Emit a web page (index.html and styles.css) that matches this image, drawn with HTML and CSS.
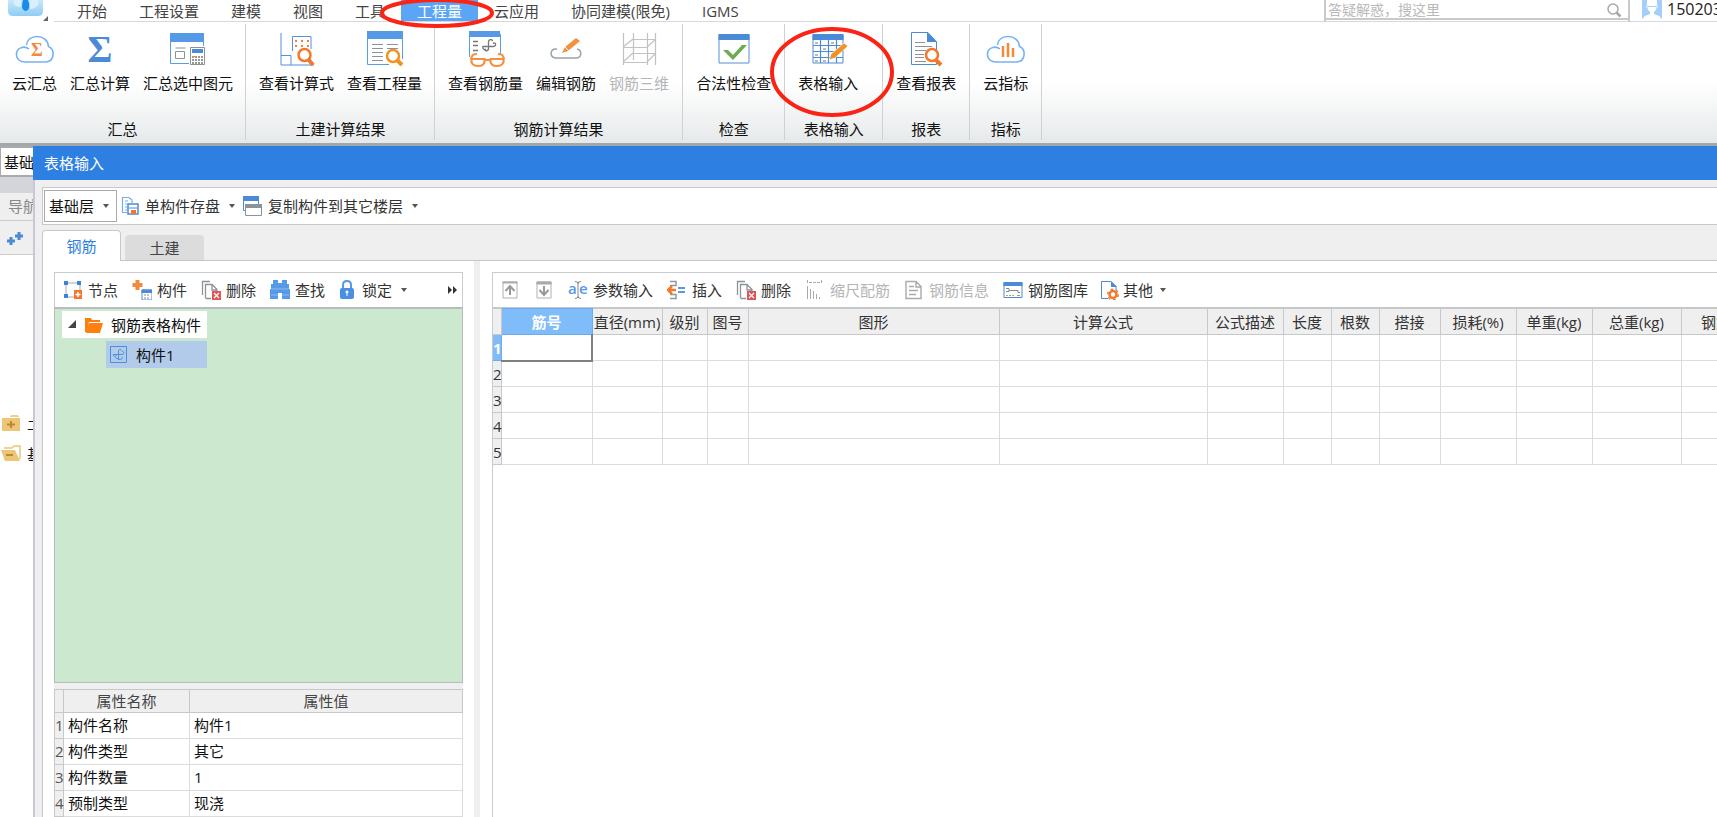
FILE: index.html
```html
<!DOCTYPE html>
<html lang="zh-CN">
<head>
<meta charset="utf-8">
<title>表格输入</title>
<link rel="stylesheet" href="styles.css">
</head>
<body>
<header class="topbar">
  <button class="logo" aria-label="菜单">
    <svg width="54" height="22" viewBox="0 0 54 22"><defs><linearGradient id="lg" x1="0" x2="0" y1="0" y2="1"><stop offset="0" stop-color="#c9e8fb"/><stop offset="1" stop-color="#8fcdf5"/></linearGradient></defs><path d="M8 0H43V11Q43 16 38 16H13Q8 16 8 11Z" fill="url(#lg)"/><path d="M14 0h7v7q-5 0-7-3zM30 0h8v5q-3 4-8 4z" fill="#d9effc"/><path d="M23 0h5q2 4 1 8-1 3-3 3-3 0-4-4 0-4 1-7z" fill="#1a8be6"/><path d="M48 16v5h-5z" fill="#666"/></svg>
  </button>
  <nav class="tabs">
    <button>开始</button><button>工程设置</button><button>建模</button><button>视图</button><button>工具</button>
    <button class="on">工程量<svg class="mark mark-tab" width="120" height="32"><ellipse cx="60" cy="14" rx="55" ry="13"/></svg></button>
    <button>云应用</button><button>协同建模(限免)</button><button>IGMS</button>
  </nav>
  <div class="search">
    <input type="text" aria-label="搜索" placeholder="答疑解惑，搜这里">
    <svg width="16" height="16" fill="none" stroke="#a8a8a8"><circle cx="7" cy="7" r="5" stroke-width="1.5"/><path d="M10.500 10.500L14.500 14.500" stroke-width="2.500"/></svg>
  </div>
  <div class="user">
    <svg width="20" height="20"><path d="M0 0h20v19H0z" fill="#a3cffa"/><path d="M5 0h10v6h1v1h-1q-1 4-3 5v2l5 2 3 3H0l3-3 5-2v-2Q6 11 5 7H4V6h1z" fill="#fff"/><path d="M5 6.500h10" stroke="#a3cffa"/></svg>
    <span>150203</span>
  </div>
</header>

<section class="ribbon">
  <div class="group">
    <div class="tools">
      <button><svg viewBox="0 0 40 40"><g fill="none" stroke="#74b3f6" stroke-width="1.600"><path d="M10 33H31C40 32 40 20 33.500 17.500 33 11 28 7.500 22 7.500 16 7.500 12 11 11.500 16"/><path d="M14 20C9 16 1 19 1.500 26 1.500 30 5 33 10 33"/></g><text x="22" y="27" class="sigma" font-size="18" fill="#f28a3c">Σ</text></svg>云汇总</button>
      <button><svg viewBox="0 0 40 40"><text x="20" y="33" class="sigma" font-size="38" fill="#4a8ad6">Σ</text></svg>汇总计算</button>
      <button><svg viewBox="0 0 40 40"><path d="M2.500 5V34.500H21M35.500 12v5" fill="none" stroke="#5c9ce6"/><path d="M2 4h34v9H2z" fill="#5699e6"/><path d="M7.500 19h10M7.500 22.500h9v7h-9z" fill="none" stroke="#8b9399"/><path d="M22.500 18.500h14v17h-14z" fill="#fff" stroke="#8b9399"/><path d="M24 20h11v4H24z" fill="#4a8ad6"/><path d="M24 28h11M24 31h11M24 34h11" stroke="#777" stroke-width="1.500" stroke-dasharray="2 1"/><path d="M24 27h3v1h-3z" fill="#f28a3c"/></svg>汇总选中图元</button>
    </div>
    <h2>汇总</h2>
  </div>
  <div class="group">
    <div class="tools">
      <button><svg viewBox="0 0 40 40"><g fill="none" stroke="#5590dc"><path d="M4 4V36H37M4 26.500H14V36M15.500 22V7.500H34V20"/></g><path d="M18 12h2M24 12h2M30 12h2M18 17h2M24 17h2M30 17h2" stroke="#f2823a" stroke-width="2"/><circle cx="27.500" cy="26" r="6" fill="#fff" stroke="#f2782e" stroke-width="2.500"/><path d="M31 30l5 6" stroke="#f2782e" stroke-width="4"/></svg>查看计算式</button>
      <button><svg viewBox="0 0 40 40"><path d="M2.500 5V35.500H24M37.500 5V30" fill="none" stroke="#5c9ce6"/><path d="M2 2h36v8H2z" fill="#5699e6"/><path d="M7 15.500h11M7 19.500h11M7 23.500h11M7 27.500h11M7 31.500h11M22 15.500h11M22 19.500h11" stroke="#8b9399"/><circle cx="28" cy="27" r="6" fill="#fff" stroke="#ee9324" stroke-width="2.500"/><path d="M32 31l5 5" stroke="#ee9324" stroke-width="4"/></svg>查看工程量</button>
    </div>
    <h2>土建计算结果</h2>
  </div>
  <div class="group">
    <div class="tools">
      <button><svg viewBox="0 0 40 40"><path d="M3.500 5V28M34.500 5v20" fill="none" stroke="#5c9ce6"/><path d="M3 2h31v6H3z" fill="#5699e6"/><path d="M7 12.500h5M7 16.500h5M7 21.500h5M17 17.500H27c4 0 3-5 0-3M17 17c-1 3 1 4 3 3M22.500 21V13c0-3 4-3 4-1M22.500 19c0 4-4 3-4 1" fill="none" stroke="#777" stroke-width="1.300"/><g fill="none" stroke="#f39140" stroke-width="2.200"><path d="M11 25c-4 0-5 1-6 5M32 25c4 0 5 1 6 5"/><path d="M5.500 30h13v3q-1 4-6 4-6 0-7-4zM24.500 30h13v3q-1 4-7 4-5 0-6-4zM18 31h7"/></g></svg>查看钢筋量</button>
      <button><svg viewBox="0 0 40 40"><path d="M11 20C4 19 3 28 9 29H31C36 28 36 21 31 20" fill="none" stroke="#9ba3aa" stroke-width="1.500"/><path d="M16 24l3-6L30 9l4 3-12 10z" fill="#f39140"/><path d="M19 18l4 4" stroke="#fff"/></svg>编辑钢筋</button>
      <button class="off"><svg viewBox="0 0 40 40" fill="none" stroke="#c2c2c2"><path d="M4.500 4V36M14.500 4V31M28.500 4V36M36.500 4V36M4 18.500H28M4 33.500H28M14 10.500H37M14 24.500H37M4 18l10-8M28 18l9-8M4 33l10-9M28 33l9-9" stroke-width="1.200"/></svg>钢筋三维</button>
    </div>
    <h2>钢筋计算结果</h2>
  </div>
  <div class="group">
    <div class="tools">
      <button><svg viewBox="0 0 40 40"><path d="M5 6h30v28H5z" fill="#fff" stroke="#5590dc"/><path d="M4.500 5h31v6h-31z" fill="#4a8ad6"/><path d="M9 21h5l5 5 9-10h5L19 31z" fill="#6cab50"/></svg>合法性检查</button>
    </div>
    <h2>检查</h2>
  </div>
  <div class="group wide">
    <div class="tools">
      <button><svg viewBox="0 0 40 40"><path d="M5 6h30v28H5z" fill="#fff" stroke="#4a8ad6"/><path d="M4.500 5h31v6h-31z" fill="#4a8ad6"/><path d="M5 16.500H35M5 22.500H35M5 28.500H35M12.500 11V34M20.500 11V34M28.500 11V34" stroke="#4a8ad6" stroke-width="1.200"/><path d="M7 14h3M15 20h3M23 14h3M7 26h3M15 32h3M7 32h3" stroke="#777"/><path d="M21 31l2-6L36 14l4 3-13 12z" fill="#ee9324" stroke="#fff" stroke-width=".7"/></svg>表格输入<svg class="mark mark-tool" width="128" height="94"><ellipse cx="64" cy="47" rx="60" ry="43"/></svg></button>
    </div>
    <h2>表格输入</h2>
  </div>
  <div class="group">
    <div class="tools">
      <button><svg viewBox="0 0 40 40"><path d="M5.500 3.500H22L30.500 13V35.500H5.500z" fill="#fff" stroke="#4a8ad6"/><path d="M21 3l10 10H21z" fill="#4a8ad6"/><path d="M9 13.500h10M9 17.500h17M9 21.500h11M9 25.500h9M9 28.500h9M9 32.500h11" stroke="#8b9399"/><circle cx="26" cy="26" r="6" fill="#fff" stroke="#f2782e" stroke-width="2.500"/><path d="M30 31l5 5" stroke="#f2782e" stroke-width="4"/></svg>查看报表</button>
    </div>
    <h2>报表</h2>
  </div>
  <div class="group">
    <div class="tools">
      <button><svg viewBox="0 0 40 40"><g fill="none" stroke="#74b3f6" stroke-width="1.600"><path d="M10 33H31C40 32 40 20 33.500 17.500 33 11 28 7.500 22 7.500 16 7.500 12 11 11.500 16"/><path d="M14 20C9 16 1 19 1.500 26 1.500 30 5 33 10 33"/></g><path d="M17 17v11M22 14v14M27 19v9" stroke="#f28a3c" stroke-width="2.500"/></svg>云指标</button>
    </div>
    <h2>指标</h2>
  </div>
</section>

<main class="workspace">
  <aside class="nav">
    <select class="floor" aria-label="楼层"><option>基础层</option></select>
    <div class="band"></div>
    <h3>导航</h3>
    <div class="navtools"><button aria-label="展开"><svg width="18" height="16"><path d="M4 6v8M0 10h8M12 1v8M8 5h8" stroke="#4a8ad6" stroke-width="3"/></svg></button></div>
    <ul>
      <li><svg width="22" height="18"><path d="M10 3q0-2 2-2h5q2 0 2 2z" fill="#f0cd85"/><path d="M2 4h18v13H2z" fill="#ecc577"/><path d="M11 7v7M7 10.500h8" stroke="#b98a2e" stroke-width="2"/></svg>土</li>
      <li><svg width="22" height="18"><path d="M4 3h8l2-2h6v13" fill="none" stroke="#ecc577" stroke-width="1.500"/><path d="M1 5h14l5 11H5z" fill="#ecc577"/><path d="M6 10h7" stroke="#b98a2e" stroke-width="2"/></svg>基</li>
    </ul>
  </aside>

  <section class="dialog">
    <h1>表格输入</h1>
    <div class="frame">
      <div class="cmdbar">
        <span class="combo"><select aria-label="当前楼层"><option>基础层</option></select><i class="caret"></i></span>
        <button><svg width="18" height="20" fill="none"><path d="M6 16.500H1.500V1.500H8L11 4v3M4 5h3M4 8h2M4 11h2M4 14h2" stroke="#74acec" stroke-width="1.200"/><path d="M7 8h10v10H7z" fill="#fff" stroke="#4a8ad6" stroke-width="1.500"/><path d="M8 12h8" stroke="#4a8ad6"/><path d="M10 14h5v4h-5z" fill="#f2782e"/></svg>单构件存盘<i class="caret"></i></button>
        <button><svg width="20" height="20"><path d="M1.500 2V14.500H4M16.500 5v3" fill="none" stroke="#4a8ad6"/><path d="M1 0h16v5H1z" fill="#4a8ad6"/><path d="M3.500 8.500h16v11h-16z" fill="#fff" stroke="#8b9399"/><path d="M3 8h17v4H3z" fill="#8b9399"/></svg>复制构件到其它楼层<i class="caret"></i></button>
      </div>
      <div class="pages"><button class="on">钢筋</button><button>土建</button></div>
      <div class="page">
        <div class="left">
          <div class="toolbar">
            <button><svg><path d="M3 3h14v14H3z" fill="none" stroke="#a5abb0"/><path d="M1 1h4v4H1zM14 1h4v4h-4zM1 14h4v4H1z" fill="#3d82d8"/><path d="M11 10h8v9h-8z" fill="#f2782e"/><path d="M15 12v5M12.500 14.500h5" stroke="#fff" stroke-width="1.500"/></svg>节点</button>
            <button><svg><path d="M5.500 0v10M.500 5h10" stroke="#f28a3c" stroke-width="4"/><path d="M10 10h10v10H10z" fill="#fff" stroke="#4a8ad6"/><path d="M9.500 9.500H20V13H9.500z" fill="#4a8ad6"/><path d="M12 15h6M12 18h6" stroke="#888" stroke-dasharray="2 1"/></svg>构件</button>
            <button><svg><use href="#del"/></svg>删除</button>
            <button><svg><path d="M3 0h5v3h4V0h5v4h2v5h1v10h-8v-6H8v6H0V9h1V4h2z" fill="#5699e6"/><path d="M1 9h18M1 15h7M12 15h7" stroke="#8fbcf0"/></svg>查找</button>
            <button class="lock"><svg><path d="M6 8V5q0-4 4-4t4 4v3" fill="none" stroke="#5699e6" stroke-width="2"/><rect x="3" y="8" width="14" height="11" rx="2" fill="#4a90e2"/><circle cx="10" cy="12" r="1.500" fill="#fff"/><path d="M10 12v4" stroke="#fff"/></svg>锁定<i class="caret"></i></button>
            <button class="more" aria-label="更多"><svg width="10" height="8"><path d="M0 0l4 4-4 4zM5 0l4 4-4 4z" fill="#333"/></svg></button>
          </div>
          <div class="tree">
            <div class="node root"><svg width="9" height="9"><path d="M8 0v8H0z" fill="#444"/></svg><svg width="18" height="16"><path d="M0 1h6l1 2h8v2H4L2 15H0z" fill="#f98010"/><path d="M4 6h14l-3 10H1z" fill="#ff7f0f"/></svg>钢筋表格构件</div>
            <div class="node leaf"><svg width="17" height="17" fill="none" stroke="#4a90d9"><path d="M.500.500h16v16H.500z"/><path d="M3.500 8.500H12c3 0 2-4 0-3M3.500 8c-1 3 2 3 3 1M8.500 14V5c0-2 3-2 3 0M5.500 11c0 2 3 2 3 1M8.500 13c2 1 4 0 4-2"/></svg>构件1</div>
          </div>
          <div class="propbox">
          <table class="props">
            <colgroup><col class="n"><col class="k"><col></colgroup>
            <thead><tr><th></th><th>属性名称</th><th>属性值</th></tr></thead>
            <tbody>
              <tr><th>1</th><td>构件名称</td><td>构件1</td></tr>
              <tr><th>2</th><td>构件类型</td><td>其它</td></tr>
              <tr><th>3</th><td>构件数量</td><td>1</td></tr>
              <tr><th>4</th><td>预制类型</td><td>现浇</td></tr>
            </tbody>
          </table>
          </div>
        </div>
        <div class="splitter"></div>
        <div class="right">
          <div class="toolbar">
            <button aria-label="上移"><svg><path d="M3 2h14v16H3z" fill="none" stroke="#b0b0b0"/><path d="M2.500 1.500h15v2h-15z" fill="#aaa"/><path d="M10 15V6M5.500 11L10 6l4.500 5" fill="none" stroke="#999" stroke-width="2"/></svg></button>
            <button aria-label="下移"><svg><path d="M3 2h14v16H3z" fill="none" stroke="#b0b0b0"/><path d="M2.500 1.500h15v3h-15z" fill="#aaa"/><path d="M10 6v9M5.500 10l4.500 5 4.500-5" fill="none" stroke="#999" stroke-width="2"/></svg></button>
            <button><svg><text x="0" y="14" class="ae">a</text><text x="11" y="14" class="ae">e</text><path d="M7 1.500q3 0 3 2 0-2 3-2M10 3v14M7 18.500q3 0 3-2 0 2 3 2" fill="none" stroke="#888"/></svg>参数输入</button>
            <button><svg><path d="M3 1.500h6v4H3M3 14.500h6v4H3" fill="none" stroke="#9199a0" stroke-width="1.500"/><path d="M1 10h8M5 6l-4 4 4 4" fill="none" stroke="#f2782e" stroke-width="2.500"/><path d="M11 8h7M11 12h7" stroke="#5699e6" stroke-width="2"/></svg>插入</button>
            <button><svg><use href="#del"/></svg>删除</button>
            <button class="off"><svg stroke="#aaa" fill="none"><path d="M2.500 0v4M16.500 0v4M4 2.500h11" stroke-dasharray="3 1"/><path d="M2.500 6v13M5.500 9v10M8.500 11v8M11.500 14v5M14.500 17v2"/></svg>缩尺配筋</button>
            <button class="off"><svg stroke="#aaa" fill="none"><path d="M2 1.500h10l5 5v12H2zM12 1v6h5M5 6.500h5M5 10.500h9M5 14.500h7" stroke-width="1.400"/></svg>钢筋信息</button>
            <button><svg><path d="M1 2.500h18v15H1z" fill="#fff" stroke="#4a8ad6"/><path d="M.500 2h19v4H.500z" fill="#4a8ad6"/><path d="M3 8.500h3v3H3M6 10.500h9v2h2" fill="none" stroke="#888"/><path d="M3 15.500h2m4 0h2" stroke="#e99a35"/><path d="M6 15.500h2m6 0h3" stroke="#7bb661"/></svg>钢筋图库</button>
            <button class="other"><svg><path d="M8 18.500H1.500V1.500H11L16 6.500V10" fill="#fff" stroke="#4a8ad6"/><path d="M11 1v6h6z" fill="#4a8ad6"/><circle cx="13" cy="14.500" r="3.500" fill="#fff" stroke="#f2782e" stroke-width="2.500"/><circle cx="13" cy="14.500" r="5.300" fill="none" stroke="#f2782e" stroke-width="1.500" stroke-dasharray="2.500 3"/></svg>其他<i class="caret"></i></button>
          </div>
          <div class="gridwrap">
            <table class="grid">
              <colgroup><col class="w8"><col class="w91"><col class="w70"><col class="w45"><col class="w41"><col class="w251"><col class="w208"><col class="w76"><col class="w48"><col class="w48"><col class="w61"><col class="w76"><col class="w76"><col class="w89"><col class="w70"></colgroup>
              <thead><tr><th></th><th class="sel">筋号</th><th>直径(mm)</th><th>级别</th><th>图号</th><th>图形</th><th>计算公式</th><th>公式描述</th><th>长度</th><th>根数</th><th>搭接</th><th>损耗(%)</th><th>单重(kg)</th><th>总重(kg)</th><th>钢筋</th></tr></thead>
              <tbody>
                <tr><th class="sel">1</th><td class="cur"></td><td></td><td></td><td></td><td></td><td></td><td></td><td></td><td></td><td></td><td></td><td></td><td></td><td></td></tr>
                <tr><th>2</th><td></td><td></td><td></td><td></td><td></td><td></td><td></td><td></td><td></td><td></td><td></td><td></td><td></td><td></td></tr>
                <tr><th>3</th><td></td><td></td><td></td><td></td><td></td><td></td><td></td><td></td><td></td><td></td><td></td><td></td><td></td><td></td></tr>
                <tr><th>4</th><td></td><td></td><td></td><td></td><td></td><td></td><td></td><td></td><td></td><td></td><td></td><td></td><td></td><td></td></tr>
                <tr><th>5</th><td></td><td></td><td></td><td></td><td></td><td></td><td></td><td></td><td></td><td></td><td></td><td></td><td></td><td></td></tr>
              </tbody>
            </table>
          </div>
        </div>
      </div>
    </div>
  </section>
</main>

<svg class="defs" width="0" height="0"><defs><g id="del"><path d="M1.500 15V1.500H9M4.500 18V4.500H11L16 9.500V12M4.500 18.500H10M11 4v6h5" fill="none" stroke="#8b9399" stroke-width="1.300"/><path d="M11 11h9v9h-9z" fill="#dd5555"/><path d="M13 13l5 5M18 13l-5 5" stroke="#fff" stroke-width="1.200"/></g></defs></svg>
</body>
</html>
```

FILE: styles.css
```css
* { box-sizing: border-box; }
body {
  margin: 0;
  height: 100vh;
  overflow: hidden;
  display: flex;
  flex-direction: column;
  background: #fff;
  color: #222;
  font: 15px/22px "Open Sans", "Noto Sans CJK SC", sans-serif;
}
button, input, select { font: inherit; color: inherit; border: 0; padding: 0; margin: 0; background: none; appearance: none; outline: 0; border-radius: 0; white-space: nowrap; }
h1, h2, h3, ul { margin: 0; padding: 0; font-size: 15px; font-weight: 400; list-style: none; }
svg { flex: none; }
.defs { position: absolute; }
.caret { flex: none; border: 3px solid transparent; border-top: 4px solid #555; border-bottom: 0; }

.topbar { display: flex; height: 22px; flex: none; }
.logo { width: 54px; height: 22px; display: flex; flex: none; }
.tabs { display: flex; flex: 1; padding-left: 7px; border-bottom: 1px solid #d8d8d8; color: #444; }
.tabs button { padding: 0 16px; height: 21px; line-height: 18px; position: relative; }
.tabs .on { background: #5aa5f5; color: #fff; }
.mark { position: absolute; fill: none; stroke: #fb2313; stroke-width: 4; z-index: 5; pointer-events: none; }
.mark-tab { left: -24px; top: -1px; }
.search { display: flex; align-items: center; width: 306px; height: 22px; border: 1px solid #c9c9c9; border-width: 0 2px; padding: 0 6px 3px 2px; background: linear-gradient(#fff 18px, #c9c9c9 18px, #c9c9c9 20px, #fff 20px, #fff 21px, #d8d8d8 21px); }
.search input { flex: 1; min-width: 0; height: 18px; font-size: 14px; }
.search input::placeholder { color: #b9b9b9; }
.user { display: flex; gap: 5px; width: 87px; padding-left: 12px; border-bottom: 1px solid #d8d8d8; overflow: hidden; font-size: 16px; line-height: 18px; color: #222; }

.ribbon { display: flex; flex: none; padding: 2px 0 3px; border-bottom: 3px solid #a3a7aa; background: linear-gradient(#fff 50%, #e6e9ea); color: #111; }
.group { display: flex; flex-direction: column; padding: 5px 12px 0 13px; border-right: 1px solid #cfd2d3; }
.group:first-child { padding-left: 12px; }
.group:nth-child(n+3) { padding-right: 13px; }
.wide { min-width: 98px; }
.tools { display: flex; gap: 13px; }
.tools button { display: flex; flex-direction: column; align-items: center; gap: 3px; position: relative; }
.tools button > svg:first-child { width: 40px; height: 40px; }
.mark-tool { left: -30px; top: -4px; }
.group h2 { margin-top: 24px; text-align: center; }
.off { color: #b5b5b5; }
.sigma { font-family: "Liberation Serif", serif; font-weight: 700; text-anchor: middle; }

.workspace { flex: 1; min-height: 0; display: grid; grid-template-columns: 33px minmax(0, 1fr); }
.nav { overflow: hidden; white-space: nowrap; }
.floor { width: 80px; height: 31px; padding-left: 3px; border: 1px solid #a9acaf; border-width: 2px 1px; background: #fff; color: #111; }
.band { height: 16px; background: #d3d5db; }
.nav h3 { height: 28px; padding: 2px 0 0 8px; background: #efefef; border-bottom: 1px solid #ccc; color: #888; }
.navtools { height: 34px; padding: 9px 0 0 7px; background: #efefef; border-bottom: 1px solid #ccc; }
.nav ul { padding-top: 152px; color: #111; }
.nav li { display: flex; align-items: center; gap: 5px; height: 31px; }

.dialog { display: flex; flex-direction: column; min-width: 0; min-height: 0; }
.dialog h1 { height: 34px; flex: none; padding: 6px 11px; background: #2d7fe1; color: #fff; }
.frame { flex: 1; min-height: 0; display: flex; flex-direction: column; padding: 7px 0 0 7px; border-left: 2px solid #c8c9d2; background: #efefef; }
.cmdbar { display: flex; align-items: center; gap: 7px; height: 38px; flex: none; padding-left: 1px; border: 1px solid #c8c8cc; border-right: 0; background: #fff; }
.cmdbar button { display: flex; align-items: center; gap: 6px; color: #333; }
.cmdbar .caret { margin-left: 3px; }
.combo { display: flex; align-items: center; width: 73px; height: 32px; padding: 0 7px 0 4px; border: 1px solid #aaa; color: #111; margin-right: -3px; }
.combo select { flex: 1; min-width: 0; }
.pages { display: flex; align-items: flex-end; gap: 4px; height: 36px; flex: none; padding-top: 5px; box-shadow: inset 0 -1px #c4c6cb; color: #444; }
.pages button { width: 79px; height: 25px; background: #dcdcdc; border-radius: 4px 4px 0 0; margin-bottom: 1px; }
.pages .on { height: 31px; margin-bottom: 0; background: #fff; border: 1px solid #c8c8cc; border-bottom: 0; color: #2d7fe1; }
.page { flex: 1; min-height: 0; display: flex; padding-top: 11px; border-left: 1px solid #c8c8cc; background: #fff; }
.left { width: 409px; margin: 0 11px; flex: none; display: flex; flex-direction: column; min-height: 0; }
.toolbar { display: flex; align-items: center; gap: 14px; height: 35px; flex: none; padding-left: 8px; border: 1px solid #c8ccd0; border-bottom: 0; color: #333; }
.toolbar button { display: flex; align-items: center; gap: 5px; flex: none; }
.toolbar .off { color: #b5b5b5; }
.toolbar svg { width: 20px; height: 20px; }
.toolbar .caret { margin-left: 4px; }
.toolbar .more { margin: 0 4px 0 auto; }
.toolbar .more svg { width: 10px; height: 8px; }
.lock { margin-left: -2px; }
.toolbar .other { gap: 3px; margin-left: -2px; }
.ae { font: 600 15px "Open Sans", sans-serif; fill: #5699e6; }
.tree { flex: 1; min-height: 0; padding: 2px 7px; border: 1px solid #b8bcbc; border-top-width: 2px; background: #cce8cf; color: #111; }
.node { display: flex; align-items: center; height: 27px; }
.root { width: 145px; padding-left: 6px; gap: 8px; background: #fff; }
.leaf { width: 101px; margin: 3px 0 0 44px; padding-left: 4px; gap: 9px; background: #b2cbeb; }

table { border-collapse: collapse; table-layout: fixed; }
th { font-weight: 400; padding: 0; background: #efefef; border: 1px solid #c8c8c8; white-space: nowrap; }
td { padding: 0 4px; border: 1px solid #dcdcdc; }
tr { height: 26px; }
.propbox { flex: none; padding-top: 6px; background: #efefef; }
.props { width: 100%; line-height: 21px; background: #fff; color: #111; }
.props thead tr { height: 23px; }
.props thead th { color: #444; }
.props tbody th { color: #555; }
.props .n { width: 9px; }
.props .k { width: 126px; }
.splitter { width: 6px; flex: none; margin-top: -11px; background: #efefef; }
.right { flex: 1; min-width: 0; margin-left: 12px; border-left: 1px solid #c8ccd0; }
.right .toolbar { border-left: 0; border-right: 0; padding-left: 7px; }
.gridwrap { overflow: hidden; border-top: 1px solid #c4c8cb; }
.grid { width: 1258px; color: #333; line-height: 22px; }
.grid thead tr { height: 26px; }
.grid th:first-child { border-left: 0; }
.grid .sel { background: #80bbfa; border-color: #6cabf0; color: #fff; font-weight: 700; }
.grid .cur { border-right: 2px solid #808080; border-bottom: 2px solid #808080; }
.w8 { width: 8px; }
.w41 { width: 41px; }
.w45 { width: 45px; }
.w48 { width: 48px; }
.w61 { width: 61px; }
.w70 { width: 70px; }
.w76 { width: 76px; }
.w89 { width: 89px; }
.w91 { width: 91px; }
.w208 { width: 208px; }
.w251 { width: 251px; }
```
